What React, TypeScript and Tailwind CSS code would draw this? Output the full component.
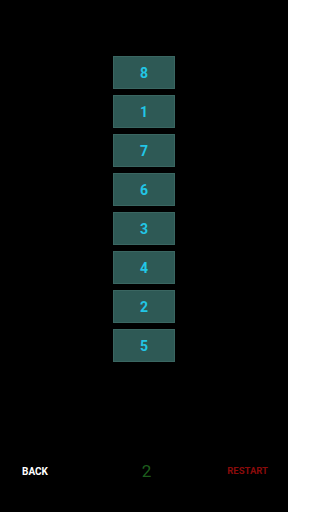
const tiles = [8, 1, 7, 6, 3, 4, 2, 5];

export default function App() {
  return (
    <div className="flex h-[512px] w-[288px] flex-col bg-black font-['Roboto',sans-serif]">
      <div className="flex flex-col items-center gap-[6px] pt-[56px]">
        {tiles.map((n) => (
          <div
            key={n}
            className="flex h-[33px] w-[62px] items-center justify-center border border-[#3a6661] bg-[#2e5955] pt-px text-[14px] font-bold text-[#22c6e6]"
          >
            {n}
          </div>
        ))}
      </div>
      <div className="mt-auto mb-[28px] flex items-center justify-between pl-[22px] pr-[20px]">
        <span className="text-[10px] font-bold text-white">BACK</span>
        <span className="ml-[18px] text-[17px] text-[#1d5e1d]">2</span>
        <span className="text-[9.5px] font-bold text-[#8a0b0b]">RESTART</span>
      </div>
    </div>
  );
}
